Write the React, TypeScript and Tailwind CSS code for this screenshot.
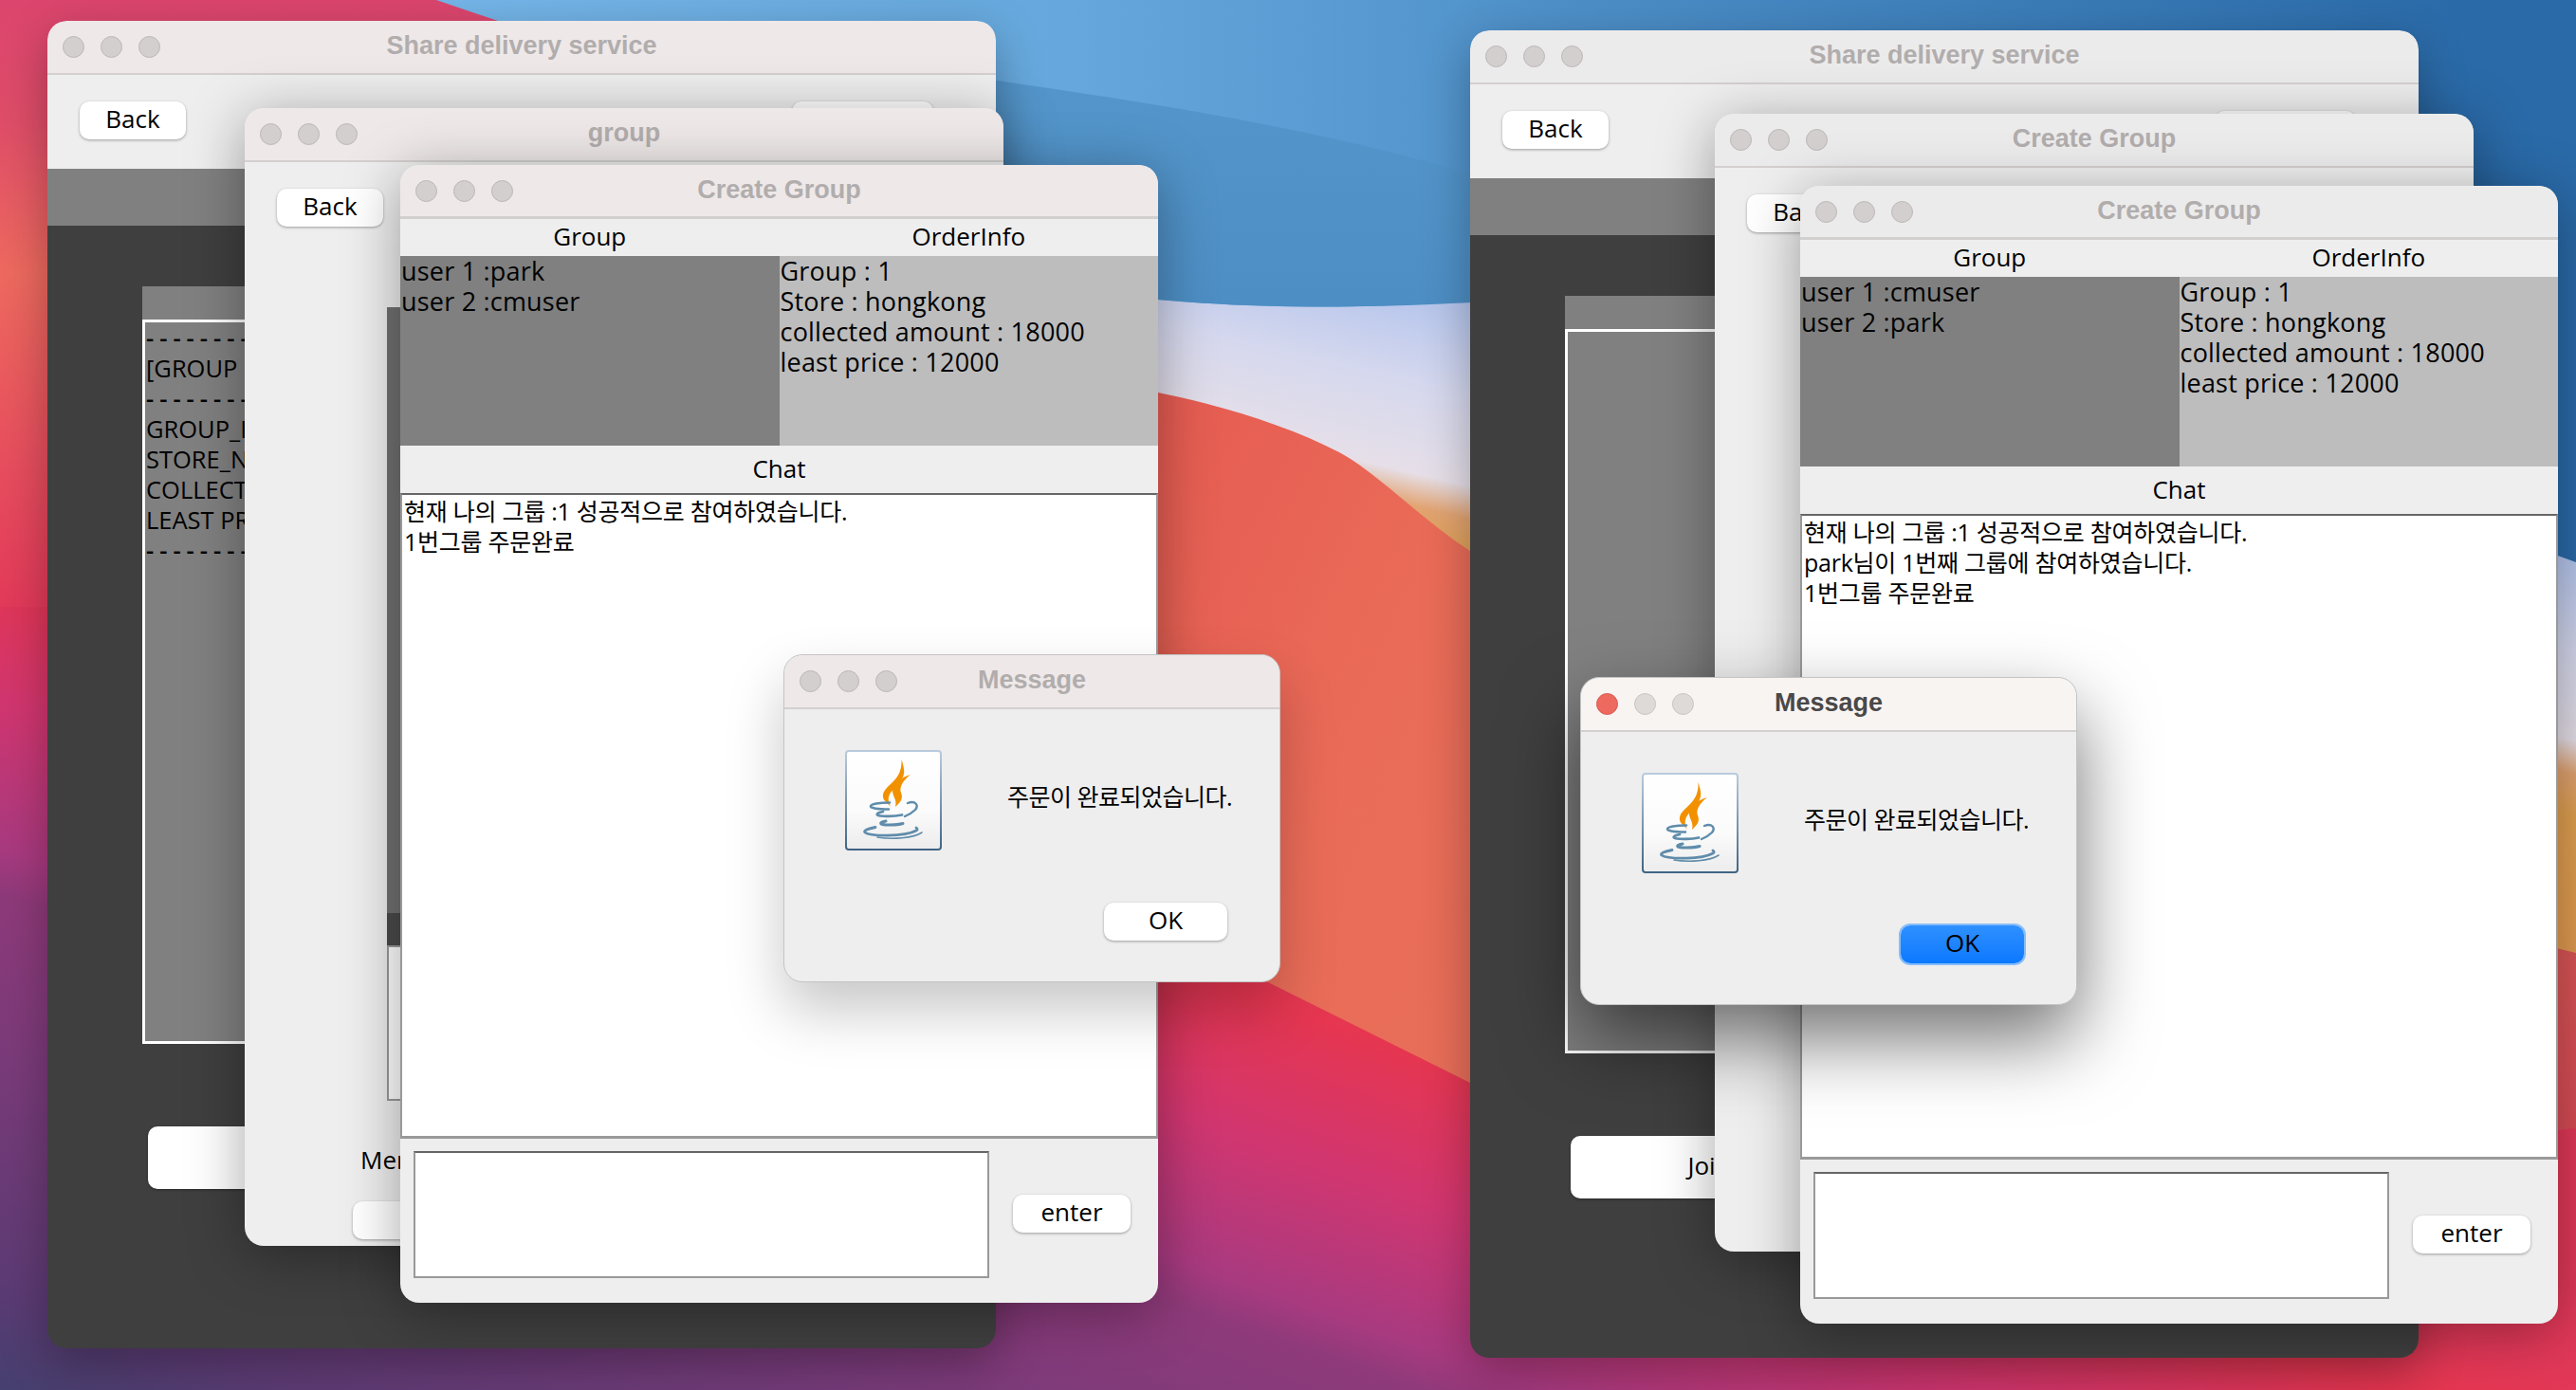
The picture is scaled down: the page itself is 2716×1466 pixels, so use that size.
import React from "react";

const Wallpaper = () => (
  <svg className="absolute inset-0" width="2716" height="1466" viewBox="0 0 2716 1466">
    <defs>
      <linearGradient id="base" gradientUnits="userSpaceOnUse" x1="0" y1="500" x2="-301" y2="1360">
        <stop offset="0" stopColor="#e23858" />
        <stop offset="0.09" stopColor="#e63650" />
        <stop offset="0.25" stopColor="#d13670" />
        <stop offset="0.41" stopColor="#a83a80" />
        <stop offset="0.457" stopColor="#8f3a7a" />
        <stop offset="0.64" stopColor="#7a3b7a" />
        <stop offset="0.89" stopColor="#5c3b74" />
        <stop offset="1" stopColor="#45406f" />
      </linearGradient>
      <linearGradient id="sky" gradientUnits="userSpaceOnUse" x1="500" y1="0" x2="2600" y2="0">
        <stop offset="0" stopColor="#74b5e8" />
        <stop offset="0.3" stopColor="#66a8dd" />
        <stop offset="0.55" stopColor="#4d8fc8" />
        <stop offset="1" stopColor="#2a6aa8" />
      </linearGradient>
      <linearGradient id="band" x1="0" y1="0" x2="0" y2="1">
        <stop offset="0" stopColor="#5597cc" />
        <stop offset="1" stopColor="#4d8ec4" />
      </linearGradient>
      <linearGradient id="pale" gradientUnits="userSpaceOnUse" x1="0" y1="-38" x2="-96" y2="378">
        <stop offset="0" stopColor="#b4c4ec" />
        <stop offset="0.22" stopColor="#d5d8ee" />
        <stop offset="0.44" stopColor="#e6dfe8" />
        <stop offset="0.52" stopColor="#e2a472" />
        <stop offset="0.62" stopColor="#e0a050" />
        <stop offset="1" stopColor="#e39a50" />
      </linearGradient>
      <linearGradient id="red" gradientUnits="userSpaceOnUse" x1="1200" y1="500" x2="2716" y2="1200">
        <stop offset="0" stopColor="#e65c52" />
        <stop offset="0.2" stopColor="#ea6c58" />
        <stop offset="0.8" stopColor="#e0745a" />
        <stop offset="1" stopColor="#d84a55" />
      </linearGradient>
      <linearGradient id="wedge" gradientUnits="userSpaceOnUse" x1="0" y1="0" x2="0" y2="640">
        <stop offset="0" stopColor="#dc456e" />
        <stop offset="0.2" stopColor="#df4d68" />
        <stop offset="0.45" stopColor="#ee6a5f" />
        <stop offset="0.75" stopColor="#e84f5e" />
        <stop offset="1" stopColor="#e33a5a" />
      </linearGradient>
    </defs>
    <rect width="2716" height="1466" fill="url(#base)" />
    <path d="M900 280 L1700 280 L2716 570 L2716 1020 L1550 600 L900 430 Z" fill="url(#pale)" />
    <path d="M0 0 L2716 0 L2716 593 C2300 440 1800 316 1550 316 C1450 326 1330 326 1221 316 L900 300 L0 300 Z" fill="url(#sky)" />
    <path d="M880 60 C1150 100 1400 130 1600 200 L1600 316 C1450 326 1330 326 1221 316 L880 300 Z" fill="url(#band)" />
    <path d="M900 390 L1221 414 C1290 428 1360 450 1412 477 C1450 497 1505 553 1550 581 C1900 700 2400 930 2716 1005 L2716 1190 C2300 1230 1800 1180 1550 1142 L1337 1036 L900 950 Z" fill="url(#red)" />
    <path d="M0 0 L460 0 L525 22 L900 300 L600 640 L0 640 Z" fill="url(#wedge)" />
  </svg>
);

const Lights = ({ active = false }: { active?: boolean }) => (
  <div className="flex gap-[17px] pl-[16px]">
    <span className={active ? "w-[23px] h-[23px] rounded-full bg-[#ee6a5f] border border-[#d85a50]" : "w-[23px] h-[23px] rounded-full bg-[#d4cfcf] border border-[#bcb7b7]"} />
    <span className={active ? "w-[23px] h-[23px] rounded-full bg-[#dedad8] border border-[#c8c4c2]" : "w-[23px] h-[23px] rounded-full bg-[#d4cfcf] border border-[#bcb7b7]"} />
    <span className={active ? "w-[23px] h-[23px] rounded-full bg-[#dedad8] border border-[#c8c4c2]" : "w-[23px] h-[23px] rounded-full bg-[#d4cfcf] border border-[#bcb7b7]"} />
  </div>
);

const TitleBar = ({ title, tone = "pink", active = false, double = false }: { title: string; tone?: "pink" | "grey"; active?: boolean; double?: boolean }) => (
  <div
    className={
      "relative flex items-center h-[57px] shrink-0 rounded-t-[20px] " +
      (active ? "bg-[#f8f4f2] " : tone === "pink" ? "bg-[#eee8e8] " : "bg-[#ecebeb] ") +
      (double ? "border-b-[3px] border-[#d2cfcf]" : "border-b-2 border-[#d4d0d0]")
    }
  >
    <Lights active={active} />
    <span
      className={
        "absolute inset-x-0 top-0 h-[52px] flex items-center justify-center text-[27px] font-bold [font-family:'Liberation_Sans',sans-serif] " +
        (active ? "text-[#4a4848]" : "text-[#b1adad]")
      }
    >
      {title}
    </span>
  </div>
);

const Btn = ({ children, className = "" }: { children?: React.ReactNode; className?: string }) => (
  <div className={"flex items-center justify-center pb-[3px] bg-white rounded-[10px] shadow-[0_1px_3px_rgba(0,0,0,0.35)] text-black shrink-0 " + className}>{children}</div>
);

const WinA = ({ pos, withText, tone }: { pos: string; withText?: boolean; tone: "pink" | "grey" }) => (
  <div className={"absolute w-[1000px] h-[1400px] rounded-[20px] flex flex-col overflow-hidden shadow-[0_16px_50px_rgba(0,0,0,0.3)] " + pos}>
    <TitleBar title="Share delivery service" tone={tone} />
    <div className="h-[99px] shrink-0 flex justify-between pl-[34px] pr-[66px] pt-[28px] bg-[#eeeeee]">
      <Btn className="w-[112px] h-[40px]">Back</Btn>
      <Btn className="w-[149px] h-[40px]" />
    </div>
    <div className="h-[60px] shrink-0 bg-[#808080]" />
    <div className="flex-1 bg-[#3f3f3f] pt-[64px] pl-[100px] flex flex-col items-start">
      <div className="w-[780px]">
        <div className="h-[35px] bg-[#808080]" />
        <div className="h-[764px] border-[3px] border-white bg-[#808080] pl-[1px] leading-[32px] text-black text-[25.5px]">
          {withText && (
            <>
              <div className="font-semibold tracking-[6px]">--------</div>
              <div>[GROUP</div>
              <div className="font-semibold tracking-[6px]">--------</div>
              <div>GROUP_ID</div>
              <div>STORE_NAME</div>
              <div>COLLECTED</div>
              <div>LEAST PRICE</div>
              <div className="font-semibold tracking-[6px]">--------</div>
            </>
          )}
        </div>
      </div>
      <Btn className="w-[292px] h-[66px] ml-[6px] mt-[87px]">Join</Btn>
    </div>
  </div>
);

const WinB = ({ pos, title, tone }: { pos: string; title: string; tone: "pink" | "grey" }) => (
  <div className={"absolute w-[800px] h-[1200px] rounded-[20px] flex flex-col overflow-hidden bg-[#eeeeee] shadow-[0_10px_60px_rgba(0,0,0,0.35)] " + pos}>
    <TitleBar title={title} tone={tone} />
    <div className="flex h-[990px] shrink-0 pl-[34px]">
      <Btn className="w-[112px] h-[40px] mt-[28px]">Back</Btn>
      <div className="ml-[4px] mt-[153px] w-[620px] flex flex-col">
        <div className="h-[639px] bg-[#707070]" />
        <div className="h-[34px] bg-[#4a4a4a]" />
        <div className="flex-1 bg-white border-2 border-[#999999]" />
      </div>
    </div>
    <div className="ml-[122px] mt-[46px] leading-[32px]">Member</div>
    <Btn className="ml-[114px] mt-[28px] w-[200px] h-[40px]" />
  </div>
);

const WinC = ({ pos, users, tone, chat }: { pos: string; users: string[]; tone: "pink" | "grey"; chat: string[] }) => (
  <div className={"absolute w-[799px] h-[1200px] rounded-[20px] flex flex-col overflow-hidden bg-[#eeeeee] shadow-[0_10px_60px_rgba(0,0,0,0.35)] " + pos}>
    <TitleBar title="Create Group" tone={tone} double />
    <div className="grid grid-cols-2 h-[39px] shrink-0 text-center leading-[37px]">
      <div>Group</div>
      <div>OrderInfo</div>
    </div>
    <div className="grid grid-cols-2 h-[200px] shrink-0 leading-[32px] text-black text-[27px] tracking-[0.2px]">
      <div className="bg-[#808080] pl-[1px]">
        {users.map((u) => (
          <div key={u}>{u}</div>
        ))}
      </div>
      <div className="bg-[#bdbdbd] pl-[1px]">
        <div>Group : 1</div>
        <div>Store : hongkong</div>
        <div>collected amount : 18000</div>
        <div>least price : 12000</div>
      </div>
    </div>
    <div className="h-[50px] shrink-0 flex items-center justify-center pb-[2px]">Chat</div>
    <div className="h-[681px] shrink-0 bg-white border-t-2 border-x-2 border-b-[3px] border-[#999999] border-t-[#666666] pl-[2px] pt-[1px] leading-[32px] text-[25px] tracking-[-0.25px]">
      {chat.map((c) => (
        <div key={c}>{c}</div>
      ))}
    </div>
    <div className="flex items-start">
      <div className="ml-[14px] mt-[13px] w-[607px] h-[134px] bg-white border-2 border-[#999999] border-t-[#666666]" />
      <Btn className="ml-[25px] mt-[59px] w-[124px] h-[40px]">enter</Btn>
    </div>
  </div>
);

const JavaIcon = () => (
  <svg width="102" height="106" viewBox="0 0 102 106" className="shrink-0">
    <defs>
      <linearGradient id="jb" x1="0" y1="0" x2="0" y2="1">
        <stop offset="0" stopColor="#b9cbdd" />
        <stop offset="1" stopColor="#3f6484" />
      </linearGradient>
      <linearGradient id="jf" x1="0" y1="0" x2="0" y2="1">
        <stop offset="0" stopColor="#ffffff" />
        <stop offset="0.6" stopColor="#fbfbfb" />
        <stop offset="1" stopColor="#ececec" />
      </linearGradient>
    </defs>
    <rect x="1" y="1" width="100" height="104" rx="3" fill="url(#jf)" stroke="url(#jb)" strokeWidth="2" />
    <path d="M59.5 10 C60 20 57 27 51 33 C45 39 39 43 40 50 C41 54 45 56 48 60 C45 54 45 50 48 45 C54 38 64 30 62 20 C61.5 16 60.5 13 59.5 10 Z" fill="#f29100" />
    <path d="M69 26 C59 29 50 35 50 43 C50 49 55 52 53 60 C60 54 61 50 59 45 C57 40 60 33 69 26 Z" fill="#f29100" />
    <g fill="none" stroke="#5f8cab" strokeLinecap="round">
      <path d="M47 55.5 C36 55.5 27 57 27 59.5 C27 61.5 35 62.5 46 62.5" strokeWidth="2.6" />
      <path d="M66 56 C74 53 78 58 74 63 C71 66 68 68 63 70" strokeWidth="2.4" />
      <path d="M40 65 C36 66 33 67 34 68.5 C36 70 50 70.5 60 68.5" strokeWidth="2.8" />
      <path d="M43 75 C38 76 37 77 38 78 C40 79.5 54 79.5 61 77.5" strokeWidth="3" />
      <path d="M32 81.5 C24 83 19 85 21 87 C26 91 62 92 75 85 C77 84 76 83 75 82" strokeWidth="2.8" />
      <path d="M34 92 C50 94.5 72 93 81 87" strokeWidth="1.6" />
    </g>
  </svg>
);

const Dialog = ({ pos, active }: { pos: string; active?: boolean }) => (
  <div
    className={
      "absolute w-[524px] h-[346px] rounded-[20px] flex flex-col overflow-visible bg-[#eeeeee] border border-[#c4c4c4] " +
      (active ? "shadow-[0_36px_80px_rgba(0,0,0,0.55)] " : "shadow-[0_30px_60px_rgba(0,0,0,0.22)] ") +
      pos
    }
  >
    <TitleBar title="Message" active={active} />
    <div className="flex items-start pl-[64px] pt-[43px]">
      <JavaIcon />
      <div className="ml-[69px] mt-[31px] leading-[36px] text-[25px] tracking-[-0.5px] whitespace-nowrap">주문이 완료되었습니다.</div>
    </div>
    <div className="flex justify-end pr-[55px] mt-[55px]">
      {active ? (
        <div className="flex items-center justify-center pb-[3px] w-[130px] h-[40px] rounded-[10px] bg-gradient-to-b from-[#2e90ff] to-[#0a78ff] ring-2 ring-[#86bdf8] text-black">OK</div>
      ) : (
        <Btn className="w-[130px] h-[40px]">OK</Btn>
      )}
    </div>
  </div>
);

export default function App() {
  return (
    <div className="relative w-[2716px] h-[1466px] overflow-hidden text-[26px] text-black [font-family:'Open_Sans','Noto_Sans_CJK_KR',sans-serif]">
      <Wallpaper />

      <WinA pos="left-[50px] top-[22px]" withText tone="pink" />
      <WinB pos="left-[258px] top-[114px]" title="group" tone="pink" />
      <WinC
        pos="left-[422px] top-[174px]"
        tone="pink"
        users={["user 1 :park", "user 2 :cmuser"]}
        chat={["현재 나의 그룹 :1 성공적으로 참여하였습니다.", "1번그룹 주문완료"]}
      />
      <Dialog pos="left-[826px] top-[690px]" />

      <WinA pos="left-[1550px] top-[32px]" tone="grey" />
      <WinB pos="left-[1808px] top-[120px]" title="Create Group" tone="grey" />
      <WinC
        pos="left-[1898px] top-[196px]"
        tone="grey"
        users={["user 1 :cmuser", "user 2 :park"]}
        chat={["현재 나의 그룹 :1 성공적으로 참여하였습니다.", "park님이 1번째 그룹에 참여하였습니다.", "1번그룹 주문완료"]}
      />
      <Dialog pos="left-[1666px] top-[714px]" active />
    </div>
  );
}
